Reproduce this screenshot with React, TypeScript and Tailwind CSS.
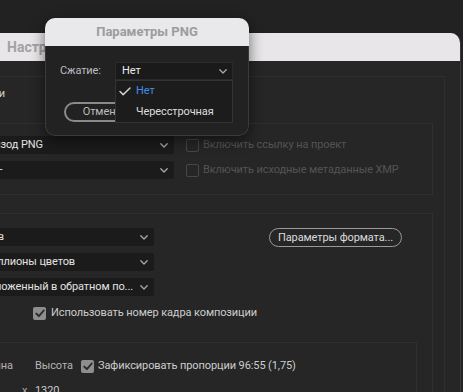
import React from "react";

const Chevron = () => (
  <svg width="8" height="5" viewBox="0 0 8 5" className="shrink-0">
    <path d="M0.8 0.8 L4 4 L7.2 0.8" fill="none" stroke="#a8a8a8" strokeWidth="1.3" strokeLinecap="round" strokeLinejoin="round" />
  </svg>
);

const CheckOn = () => (
  <div className="w-[13px] h-[13px] rounded-[2px] bg-[#8e8e8e] flex items-center justify-center shrink-0">
    <svg width="10" height="9" viewBox="0 0 10 9">
      <path d="M1.3 4.6 L3.9 7.2 L8.7 1.5" fill="none" stroke="#2a2a2a" strokeWidth="1.9" strokeLinecap="round" strokeLinejoin="round" />
    </svg>
  </div>
);

const CheckOff = () => (
  <div className="w-[13px] h-[13px] rounded-[2px] border-[1.5px] border-[#474747] shrink-0" />
);

/* text clipped at its left side: the visible part ends at `end` px */
const ClipLeft = ({ text, end, className = "" }: { text: string; end: number; className?: string }) => (
  <div className={`flex justify-end overflow-hidden whitespace-nowrap shrink-0 ${className}`} style={{ width: end }}>
    <span className="shrink-0">{text}</span>
  </div>
);

const Select = ({ text, end, width }: { text: string; end: number; width: string }) => (
  <div className={`${width} h-[18px] bg-[#1b1b1b] rounded-r-[2px] flex items-center overflow-hidden shrink-0`}>
    <div className="flex-1 text-[#e2e2e2]">
      <ClipLeft text={text} end={end} />
    </div>
    <div className="pr-[6px] pl-[4px]">
      <Chevron />
    </div>
  </div>
);

export default function App() {
  return (
    <div
      className="w-[463px] h-[392px] overflow-hidden bg-[#222222] relative text-[11px] leading-[14px] tracking-[-0.1px]"
      style={{ fontFamily: 'Roboto, "Noto Sans", sans-serif' }}
    >
      {/* main window */}
      <div className="pt-[33px] pr-[2px]">
        <div className="h-[359px] rounded-tr-[10px] overflow-hidden bg-[#262626] border-r border-[#383838] flex flex-col">
          <div className="h-[28px] shrink-0 bg-[#e8e6e8] flex items-center pl-[7px] text-[14px] font-bold text-[#a2a2a2] tracking-normal">
            Настройки вывода
          </div>
          <div className="pt-[15px]">
            {/* outer group */}
            <div className="border-t border-r border-[#2f2f2f] mr-[15px] pt-[10px] h-[400px]">
              <ClipLeft text="Настройки" end={5} className="text-[#cfcfcf]" />
              {/* box 1 */}
              <div className="mt-[22px] mr-[11px] border-t border-b border-r border-[#2f2f2f] pt-[12px] pb-[15px] flex flex-col gap-[7px]">
                <div className="flex items-center">
                  <Select text="Эпизод PNG" end={43} width="w-[174px]" />
                  <div className="ml-[12px] flex items-center gap-[4px] text-[#545454] whitespace-nowrap">
                    <CheckOff />
                    <span>Включить ссылку на проект</span>
                  </div>
                </div>
                <div className="flex items-center">
                  <Select text="–" end={3} width="w-[174px]" />
                  <div className="ml-[12px] flex items-center gap-[4px] text-[#545454] whitespace-nowrap">
                    <CheckOff />
                    <span>Включить исходные метаданные XMP</span>
                  </div>
                </div>
              </div>
              {/* box 2 */}
              <div className="mt-[18px] mr-[11px] border-t border-r border-[#2f2f2f] pt-[14px] h-[300px]">
                <div className="flex">
                  <div className="flex flex-col gap-[7px]">
                    <Select text="Без альфа-каналов" end={4} width="w-[154px]" />
                    <Select text="Миллионы цветов" end={75} width="w-[154px]" />
                    <Select text="Наложенный в обратном по..." end={133} width="w-[154px]" />
                  </div>
                  <div className="ml-[115px]">
                    <div className="h-[19px] w-[133px] rounded-full border-[1.5px] border-[#9a9a9a] flex items-center justify-center text-[#dcdcdc] whitespace-nowrap">
                      Параметры формата...
                    </div>
                  </div>
                </div>
                <div className="mt-[10px] ml-[33px] flex items-center gap-[5px] text-[#cdcdcd] whitespace-nowrap">
                  <CheckOn />
                  <span>Использовать номер кадра композиции</span>
                </div>
                {/* box 3 */}
                <div className="mt-[22px] mr-[15px] border-t border-r border-[#2f2f2f] pt-[16px] h-[100px]">
                  <div className="flex items-center whitespace-nowrap">
                    <div className="w-[35px] text-[#b4b4b4]">
                      <ClipLeft text="Ширина" end={13} />
                    </div>
                    <div className="w-[46px] text-[#b4b4b4]">Высота</div>
                    <div className="flex items-center gap-[4px] text-[#cdcdcd]">
                      <CheckOn />
                      <span>Зафиксировать пропорции 96:55 (1,75)</span>
                    </div>
                  </div>
                  <div className="mt-[11px] flex items-center whitespace-nowrap text-[#c8c8c8]">
                    <span className="ml-[22px] w-[13px] text-[#a8a8a8]">x</span>
                    <span>1320</span>
                  </div>
                </div>
              </div>
            </div>
          </div>
        </div>
      </div>

      {/* PNG dialog */}
      <div className="absolute left-[45px] top-[18px] w-[204px] h-[118px] rounded-[10px] overflow-hidden shadow-[0_4px_14px_rgba(0,0,0,0.55)] flex flex-col">
        <div className="h-[28px] shrink-0 bg-[#e9e8ea] flex items-center justify-center text-[13px] font-bold text-[#9c9c9c] tracking-normal">
          Параметры PNG
        </div>
        <div className="flex-1 bg-[#222222] border border-t-0 border-[#3a3a3a] rounded-b-[10px] relative">
          <div className="mt-[16px] flex items-center pl-[14px]">
            <div className="w-[55px] text-[#bdbdbd]">Сжатие:</div>
            <div className="w-[118px] h-[18px] bg-[#1a1a1a] border border-[#2a2a2a] flex items-center pl-[6px] pr-[5px]">
              <span className="flex-1 text-[#ececec]">Нет</span>
              <Chevron />
            </div>
          </div>
          <div className="mt-[22px] ml-[18px] w-[76px] h-[20px] rounded-full border-2 border-[#8a8a8a] flex items-center justify-center text-[#bdbdbd]">
            Отмена
          </div>
          {/* dropdown menu */}
          <div className="absolute left-[69px] top-[34px] w-[118px] h-[43px] bg-[#1c1c1c] border border-[#333333] flex flex-col">
            <div className="h-[21px] flex items-center">
              <svg width="12" height="9" viewBox="0 0 12 9" className="ml-[3px] mr-[5px]">
                <path d="M1 4.5 L4.2 7.6 L11 1" fill="none" stroke="#cfcfcf" strokeWidth="1.5" strokeLinecap="round" strokeLinejoin="round" />
              </svg>
              <span className="text-[#3f8fe8]">Нет</span>
            </div>
            <div className="h-[21px] flex items-center pl-[20px] text-[#dedede]">Чересстрочная</div>
          </div>
        </div>
      </div>
    </div>
  );
}
